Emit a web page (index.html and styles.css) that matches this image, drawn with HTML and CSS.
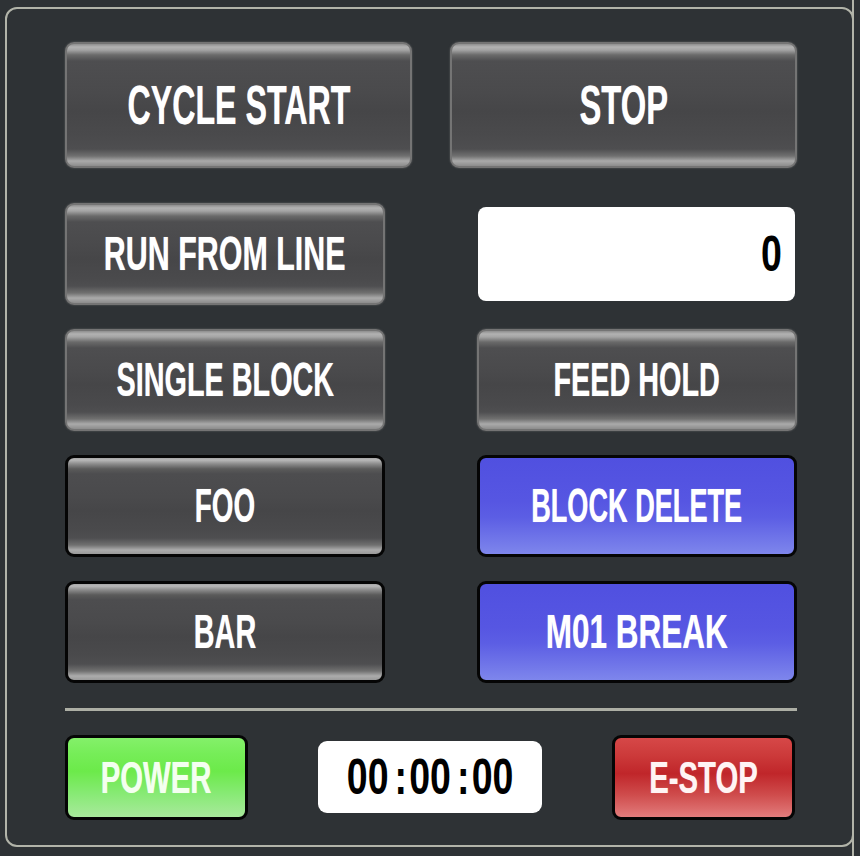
FILE: index.html
```html
<!DOCTYPE html>
<html lang="en">
<head>
<meta charset="utf-8">
<title>Cycle Control</title>
<link rel="stylesheet" href="styles.css">
</head>
<body>
<div class="screen">
  <div class="panel">
    <div class="row-main">
      <div class="btn btn-gray btn-lg"><span class="lbl sq-n">CYCLE START</span></div>
      <div class="btn btn-gray btn-lg"><span class="lbl">STOP</span></div>
    </div>
    <div class="grid">
      <div class="btn btn-gray"><span class="lbl sq-w">RUN FROM LINE</span></div>
      <div class="line-input"><span class="num">0</span></div>
      <div class="btn btn-gray"><span class="lbl">SINGLE BLOCK</span></div>
      <div class="btn btn-gray"><span class="lbl">FEED HOLD</span></div>
      <div class="btn btn-dark"><span class="lbl sq-m">FOO</span></div>
      <div class="btn btn-blue"><span class="lbl sq-n">BLOCK DELETE</span></div>
      <div class="btn btn-dark"><span class="lbl">BAR</span></div>
      <div class="btn btn-blue"><span class="lbl sq-ww">M01 BREAK</span></div>
    </div>
    <div class="sep"></div>
    <div class="status">
      <div class="btn btn-green btn-sm"><span class="lbl sq-ww">POWER</span></div>
      <div class="timer"><span class="digits">00<span class="colon">:</span>00<span class="colon">:</span>00</span></div>
      <div class="btn btn-red btn-sm"><span class="lbl sq-ww">E-STOP</span></div>
    </div>
  </div>
  <div class="splitter"></div>
</div>
</body>
</html>
```

FILE: styles.css
```css
* { box-sizing: border-box; }

html, body {
  margin: 0;
  padding: 0;
  background: #2e3235;
}

.screen {
  display: flex;
  align-items: flex-start;
  width: 860px;
  height: 856px;
  overflow: hidden;
}

.panel {
  width: 849px;
  height: 840px;
  margin: 7px 0 0 5px;
  border: 2px solid #b2b4a9;
  border-radius: 12px;
  padding: 33px 55px 0 58px;
}

.splitter {
  width: 2px;
  height: 856px;
  margin-left: -2px;
  background: #b2b4a9;
}

.row-main {
  display: grid;
  grid-template-columns: 1fr 1fr;
  column-gap: 38px;
  height: 126px;
}

.grid {
  margin-top: 35px;
  display: grid;
  grid-template-columns: 320px 320px;
  justify-content: space-between;
  grid-template-rows: repeat(4, 102px);
  row-gap: 24px;
}

.sep {
  margin-top: 25px;
  height: 3px;
  background: #adafa5;
}

.status {
  margin-top: 24px;
  height: 85px;
  padding-right: 2px;
  display: flex;
  justify-content: space-between;
  align-items: center;
}

/* buttons */
.btn {
  display: flex;
  align-items: center;
  justify-content: center;
  border-radius: 9px;
  overflow: hidden;
}

.btn-gray {
  border: 2px solid #747474;
  box-shadow: 0 0 2px rgba(140, 140, 140, 0.6);
  background: linear-gradient(180deg,
    #8e8e8e 0px, #b2b2b2 3px, #a4a4a4 6px, #6a6a6a 11px, #4e4e50 17px,
    #4a4a4c 40%, #464648 55%, #4a4a4c 75%,
    #4e4e50 calc(100% - 17px), #707070 calc(100% - 10px), #aaaaaa calc(100% - 5px), #8c8c8c 100%);
}

.btn-dark {
  border: 3px solid #050505;
  border-radius: 9px;
  background: linear-gradient(180deg,
    #a6a6a6 0px, #b8b8b8 2px, #8a8a8a 6px, #5a5a5a 11px, #4d4d4f 16px,
    #4a4a4c 40%, #464648 55%, #4a4a4c 75%,
    #4e4e50 calc(100% - 16px), #707070 calc(100% - 9px), #acacac calc(100% - 4px), #9a9a9a 100%);
}

.btn-blue {
  border: 3px solid #050505;
  border-radius: 9px;
  background: linear-gradient(180deg, #5050e0 0%, #5656e2 45%, #5c5ee4 62%, #7e86ec 100%);
}

.btn-green {
  border: 3px solid #050505;
  border-radius: 9px;
  background: linear-gradient(180deg, #84f06a 0%, #76ed58 20%, #6cea4a 42%, #87ea74 70%, #a8e99c 100%);
}

.btn-red {
  border: 3px solid #050505;
  border-radius: 9px;
  background: linear-gradient(180deg, #d64848 0%, #cc3a3a 22%, #c0262a 45%, #cf4c4c 72%, #e27c7c 100%);
}

.btn-sm {
  width: 183px;
  height: 85px;
}

/* labels */
.lbl {
  display: inline-block;
  font-family: "Liberation Sans", Arial, sans-serif;
  font-weight: 700;
  font-size: 48px;
  line-height: 1;
  white-space: nowrap;
  color: #ffffff;
  text-shadow: 0 0 1px rgba(255, 255, 255, 0.6);
  transform: scaleX(0.6);
}

.btn-lg .lbl {
  font-size: 56px;
  transform: scaleX(0.585);
}

.btn-lg .lbl.sq-n { transform: scaleX(0.575); }
.lbl.sq-n { transform: scaleX(0.565); }
.lbl.sq-m { transform: scaleX(0.58); }
.lbl.sq-w { transform: scaleX(0.634); }
.lbl.sq-ww { transform: scaleX(0.656); }

.btn-sm .lbl {
  font-size: 44px;
  color: #f4fff0;
  transform: scaleX(0.665);
}

.btn-red .lbl { color: #fff4f4; }

/* input + timer */
.line-input {
  margin: 4px 2px 4px 1px;
  background: #ffffff;
  border-radius: 8px;
  display: flex;
  align-items: center;
  justify-content: flex-end;
  padding-right: 13px;
}

.num, .digits {
  display: inline-block;
  font-family: "Liberation Sans", Arial, sans-serif;
  font-weight: 700;
  font-size: 50px;
  line-height: 1;
  color: #000000;
  white-space: nowrap;
  transform: scaleX(0.75);
}

.num { transform-origin: right center; }

.timer {
  width: 224px;
  height: 72px;
  background: #ffffff;
  border-radius: 9px;
  display: flex;
  align-items: center;
  justify-content: center;
  margin-top: -2px;
}

.colon {
  display: inline-block;
  margin: 0 3px 0 8px;
}
```
